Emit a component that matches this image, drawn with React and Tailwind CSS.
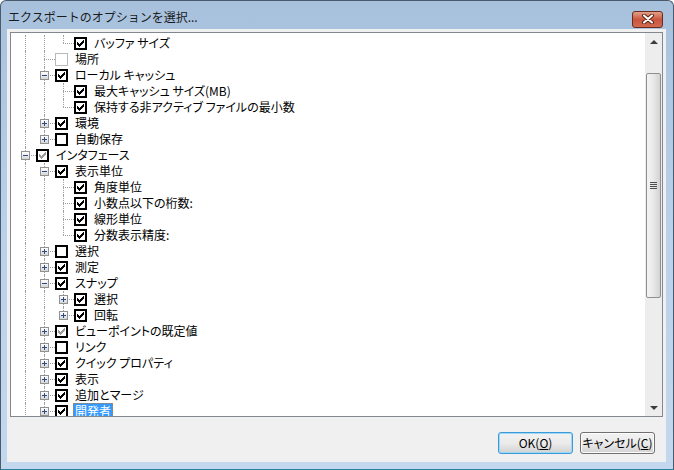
import React from "react";

// tree rows as they appear in the visible part of the list
const rows = [
  { t: "バッファ サイズ", l: 2, c: "on", last: true },
  { t: "場所", l: 1, c: "dis" },
  { t: "ローカル キャッシュ", l: 1, c: "on", e: "-" },
  { t: "最大キャッシュ サイズ(MB)", l: 2, c: "on" },
  { t: "保持する非アクティブ ファイルの最小数", l: 2, c: "on", last: true },
  { t: "環境", l: 1, c: "on", e: "+" },
  { t: "自動保存", l: 1, c: "off", e: "+", last: true },
  { t: "インタフェース", l: 0, c: "gray", e: "-" },
  { t: "表示単位", l: 1, c: "on", e: "-" },
  { t: "角度単位", l: 2, c: "on" },
  { t: "小数点以下の桁数:", l: 2, c: "on" },
  { t: "線形単位", l: 2, c: "on" },
  { t: "分数表示精度:", l: 2, c: "on", last: true },
  { t: "選択", l: 1, c: "off", e: "+" },
  { t: "測定", l: 1, c: "on", e: "+" },
  { t: "スナップ", l: 1, c: "on", e: "-" },
  { t: "選択", l: 2, c: "on", e: "+" },
  { t: "回転", l: 2, c: "on", e: "+", last: true },
  { t: "ビューポイントの既定値", l: 1, c: "gray", e: "+" },
  { t: "リンク", l: 1, c: "off", e: "+" },
  { t: "クイック プロパティ", l: 1, c: "on", e: "+" },
  { t: "表示", l: 1, c: "on", e: "+" },
  { t: "追加とマージ", l: 1, c: "on", e: "+" },
  { t: "開発者", l: 1, c: "on", e: "+", sel: true },
];

const Tick = ({ color }) => (
  <svg width="7" height="7" viewBox="0 0 7 7" shapeRendering="crispEdges" fill={color}>
    <rect x="0" y="2" width="1" height="3" />
    <rect x="1" y="3" width="1" height="3" />
    <rect x="2" y="4" width="1" height="3" />
    <rect x="3" y="3" width="1" height="3" />
    <rect x="4" y="2" width="1" height="3" />
    <rect x="5" y="1" width="1" height="3" />
    <rect x="6" y="0" width="1" height="3" />
  </svg>
);

function Check({ state }) {
  if (state === "dis")
    return <span className="block w-[13px] h-[13px] border border-[#b9b9b9] bg-white shrink-0" />;
  return (
    <span className="flex w-[13px] h-[13px] border-2 border-black bg-white shrink-0 items-center justify-center">
      {state !== "off" && <Tick color={state === "gray" ? "#9b9b9b" : "#000"} />}
    </span>
  );
}

function Expander({ sign }) {
  return (
    <span className="absolute left-[5px] top-[4px] w-[9px] h-[9px] border border-[#919191] bg-gradient-to-b from-white to-[#d6d6d6] flex items-center justify-center">
      <svg width="7" height="7" viewBox="0 0 7 7" shapeRendering="crispEdges" fill="#2a4a86">
        <rect x="1" y="3" width="5" height="1" />
        {sign === "+" && <rect x="3" y="1" width="1" height="5" />}
      </svg>
    </span>
  );
}

function Row({ r }) {
  return (
    <div className="flex items-center h-4 whitespace-nowrap">
      {Array.from({ length: r.l }).map((_, i) => (
        <div key={i} className="relative w-[19px] h-4 shrink-0">
          <div className="absolute left-[9px] top-0 w-0 h-4 border-l border-dotted border-[#a0a0a0]" />
        </div>
      ))}
      <div className="relative w-[19px] h-4 shrink-0">
        <div className="absolute left-[9px] top-0 w-0 h-2 border-l border-dotted border-[#a0a0a0]" />
        {!r.last && (
          <div className="absolute left-[9px] top-2 w-0 h-2 border-l border-dotted border-[#a0a0a0]" />
        )}
        <div className="absolute left-[9px] top-2 w-[11px] h-0 border-t border-dotted border-[#a0a0a0]" />
        {r.e && <Expander sign={r.e} />}
      </div>
      <span className="ml-[1px]">
        <Check state={r.c} />
      </span>
      <span
        className={`ml-[5px] px-[2px] h-4 leading-4 ${
          r.sel ? "bg-[#3399ff] text-white outline outline-1 outline-dotted outline-[#c08040] -outline-offset-1" : "text-black"
        }`}
      >
        {r.t}
      </span>
    </div>
  );
}

function ScrollBar() {
  return (
    <div className="w-[17px] shrink-0 flex flex-col bg-[#ededed]">
      <div className="h-[17px] flex items-center justify-center">
        <span className="w-0 h-0 border-x-[4px] border-x-transparent border-b-[4px] border-b-[#3c3c3c]" />
      </div>
      <div className="flex-1 flex flex-col">
        <div className="mt-[23px] mx-[1px] h-[225px] rounded-[2px] border border-[#8e8f8f] bg-gradient-to-r from-[#f4f4f4] via-[#e8e8e8] to-[#d3d3d3] flex items-center justify-center">
          <div className="flex flex-col gap-[1px]">
            <span className="block w-[7px] h-[1px] bg-[#4d4d4d]" />
            <span className="block w-[7px] h-[1px] bg-[#4d4d4d]" />
            <span className="block w-[7px] h-[1px] bg-[#4d4d4d]" />
            <span className="block w-[7px] h-[1px] bg-[#4d4d4d]" />
          </div>
        </div>
      </div>
      <div className="h-[17px] flex items-center justify-center">
        <span className="w-0 h-0 border-x-[4px] border-x-transparent border-t-[4px] border-t-[#3c3c3c]" />
      </div>
    </div>
  );
}

export default function App() {
  return (
    <div className="w-[674px] h-[470px] overflow-hidden font-['Noto_Sans_CJK_JP','Liberation_Sans',sans-serif] text-[12px] bg-white">
      <div className="w-full h-full flex flex-col rounded-t-[6px] border border-[#4b5a6c] border-b-[#2b7f9c] bg-gradient-to-b from-[#a7c1dd] via-[#bad1ea] to-[#c3d8ee]">
        <div className="h-[28px] shrink-0 flex items-center justify-between pl-[7px] pr-[10px] pt-[4px]">
          <span className="text-[#1b1b1b] text-[12px]">エクスポートのオプションを選択...</span>
          <div className="mt-[4px] w-[31px] h-[17px] rounded-[3px] border border-[#6e2a1e] bg-gradient-to-b from-[#e2a089] via-[#c9553c] to-[#d06a4f] flex items-center justify-center">
            <svg width="12" height="10" viewBox="0 0 12 10">
              <path d="M2 1.5 L10 8.5 M10 1.5 L2 8.5" stroke="#5a2418" strokeWidth="4" strokeLinecap="round" />
              <path d="M2 1.5 L10 8.5 M10 1.5 L2 8.5" stroke="#fff" strokeWidth="2" strokeLinecap="round" />
            </svg>
          </div>
        </div>
        <div className="flex-1 ml-[6px] mr-[7px] mb-[7px] bg-[#f0f0f0] flex flex-col [font-feature-settings:'palt']">
          <div className="m-[3px] h-[385px] border border-[#828790] bg-white flex overflow-hidden">
            <div className="flex-1 overflow-hidden pt-[2px] pl-[5px]">
              {rows.map((r, i) => (
                <Row key={i} r={r} />
              ))}
            </div>
            <ScrollBar />
          </div>
          <div className="flex justify-end gap-[7px] pr-[11px] mt-[12px]">
            <button className="w-[75px] h-[22px] rounded-[3px] border border-[#3a9bd8] shadow-[inset_0_0_0_1px_#9fd8f7] bg-gradient-to-b from-[#f2f2f2] via-[#ebebeb] to-[#d2d2d2] text-black text-[12px] leading-none">
              OK(<span className="underline">O</span>)
            </button>
            <button className="w-[75px] h-[22px] rounded-[3px] border border-[#707070] shadow-[inset_0_0_0_1px_#fcfcfc] bg-gradient-to-b from-[#f2f2f2] via-[#ebebeb] to-[#d2d2d2] text-black text-[12px] leading-none">
              キャンセル(<span className="underline">C</span>)
            </button>
          </div>
        </div>
      </div>
    </div>
  );
}
